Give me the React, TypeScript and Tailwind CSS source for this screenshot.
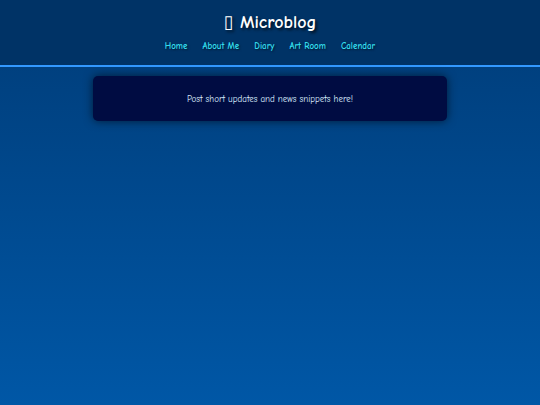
export default function App() {
    const links = ['Home', 'About Me', 'Diary', 'Art Room', 'Calendar']

    return (
        <div
            className="min-h-[405px] bg-gradient-to-b from-[#003c78] to-[#0057a6] text-white"
            style={{ fontFamily: '"Comic Sans MS", "Comic Neue", cursive' }}
        >
            <header className="bg-[#003366] border-b-2 border-[#3399ff] pt-[10px] pb-[11px] text-center">
                <h1 className="text-[18px] leading-[24px] font-bold [text-shadow:2px_2px_3px_rgba(0,0,0,0.7)]">
                    <span className="font-normal" style={{ fontFamily: '"DejaVu Sans", sans-serif' }}>▯</span> Microblog
                </h1>
                <nav className="mt-[5px] flex justify-center gap-[15px] text-[9px] font-bold text-[#33ddee]">
                    {links.map(l => (
                        <a key={l} href="#" className="[text-shadow:1px_1px_2px_rgba(0,0,0,0.5)]">{l}</a>
                    ))}
                </nav>
            </header>

            <main className="pt-[9px] flex justify-center">
                <div className="w-[354px] h-[45px] pt-[3px] rounded-[5px] bg-[#000c42] flex items-center justify-center shadow-[0_0_10px_rgba(0,0,0,0.6)]">
                    <p className="text-[9px] text-[#ddeeff]">Post short updates and news snippets here!</p>
                </div>
            </main>
        </div>
    )
}
